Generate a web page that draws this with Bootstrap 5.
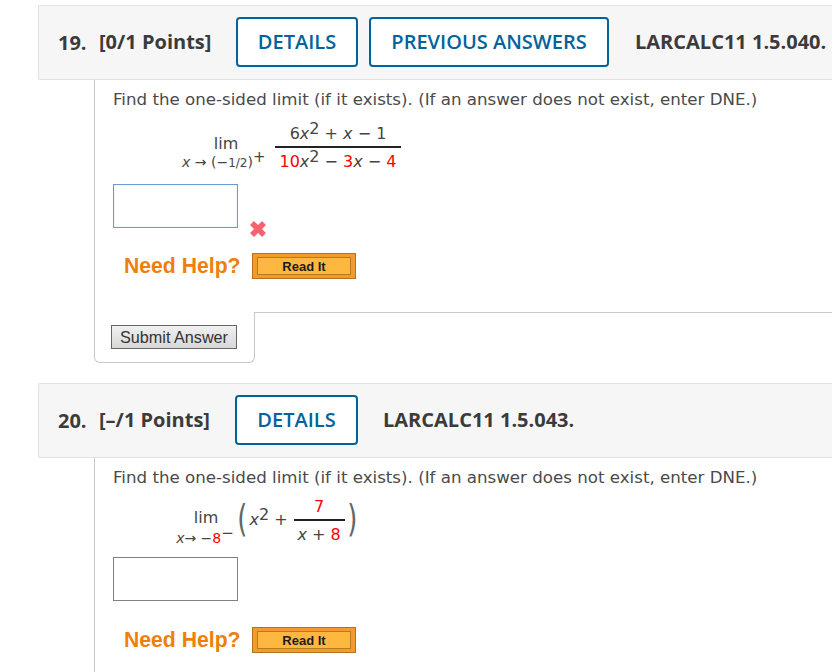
<!DOCTYPE html>
<html lang="en">
<head>
  <meta charset="UTF-8" />
  <meta name="viewport" content="width=device-width, initial-scale=1.0" />
  <title>Questions</title>
  <link href="https://cdn.jsdelivr.net/npm/bootstrap@5.3.3/dist/css/bootstrap.min.css" rel="stylesheet" />
  <style>
    html, body { height: 672px; overflow: hidden; background: #fff; }
    .page { padding: 5px 0 0 38px; }
    .q-head {
      height: 75px; background: #f6f6f6; border: 1px solid #e2e2e2; border-right: 0; border-radius: 2px 0 0 2px;
      padding-left: 19px; font-family: "Open Sans", sans-serif; font-size: 20px; color: #3b3b3b;
    }
    .q-num { width: 41px; font-weight: 700; }
    .q-pts { width: 115px; font-weight: 700; font-size: 20px; white-space: nowrap; margin-top: -1px; }
    .q-btn {
      height: 50px; margin-top: -2px; border: 2px solid #00639c; border-radius: 4px; background: #fff; color: #00639c;
      font-family: "Open Sans", sans-serif; font-weight: 600; font-size: 20px; padding: 0;
    }
    .q-ref { font-weight: 700; font-size: 20px; white-space: nowrap; margin-top: -1px; }
    .q-body { margin-left: 56px; border-left: 1px solid #c8c8c8; padding-left: 18px; }
    .q-text { font-family: "DejaVu Sans", sans-serif; font-size: 16.66px; color: #4a4a4a; line-height: 24px; white-space: nowrap; padding-top: 8px; height: 37px; }
    .eq { font-family: "DejaVu Sans", sans-serif; color: #444; font-size: 16px; line-height: 18px; white-space: nowrap; }
    .eq i { font-family: "DejaVu Sans", sans-serif; font-style: oblique; }
    .eq sup { font-size: 16px; top: -.3em; line-height: 0; }
    .red { color: #f00; }
    .lim-box { text-align: center; }
    .lim-sub { font-size: 14px; line-height: 18px; }
    .lim-sub sup { font-size: 15px !important; top: -.35em !important; }
    .lim-sub .tiny-num { font-size: 12px; }
    .frac { text-align: center; }
    .frac-top { border-bottom: 2px solid #222; padding-bottom: 3px; }
    .frac-bot { padding-top: 5px; }
    .paren { font-family: "DejaVu Sans", sans-serif; font-size: 37px; line-height: 40px; color: #666; transform: scaleX(.7); margin-top: -12px; }
    .ans-box { width: 125px; height: 44px; background: #fff; border: 1px solid #808080; display: block; }
    .ans-box.wrong { border-color: #6b9bd1; box-shadow: inset 0 0 2px #cfe0f3; }
    .help-txt { font-family: "Liberation Sans", sans-serif; font-weight: 700; font-size: 21.2px; color: #ef7f0a; width: 117px; margin-left: 11px; white-space: nowrap; }
    .read-btn {
      width: 104px; height: 26px; padding: 3px 4px; background: #f39a2c; border: 1px solid #b7701f; margin-left: 11px;
      font-family: "Liberation Sans", sans-serif; font-weight: 700; font-size: 13px; color: #1c1c1c;
    }
    .read-btn span { display: block; height: 18px; line-height: 17px; text-align: center; background: #ffb83f; border: 1px solid #b77a22; }
    .submit-cell { width: 161px; height: 51px; margin-left: 56px; padding: 13px 0 0 16px; border: 1px solid #c8c8c8; border-top: 0; border-radius: 0 0 6px 6px; }
    .submit-btn {
      width: 126px; height: 24px; padding: 0; font-family: "Liberation Sans", sans-serif; font-size: 16.2px; line-height: 20px; color: #333;
      background: linear-gradient(#f0f0f0, #d8d8d8); border: 1px solid #666;
    }
    .fill-line { border-top: 1px solid #c8c8c8; }
  </style>
</head>
<body>
<div class="page">

  <!-- Question 19 -->
  <div class="q-head d-flex align-items-center">
    <span class="q-num">19.</span>
    <span class="q-pts">[0/1 Points]</span>
    <button type="button" class="q-btn" style="width:122px;margin-left:22px">DETAILS</button>
    <button type="button" class="q-btn" style="width:240px;margin-left:11px">PREVIOUS ANSWERS</button>
    <span class="q-ref" style="margin-left:26px">LARCALC11 1.5.040.</span>
  </div>
  <div class="q-body">
    <div class="q-text">Find the one-sided limit (if it exists). (If an answer does not exist, enter DNE.)</div>
    <div class="eq d-flex align-items-center" style="margin-left:69px;height:67px">
      <div class="lim-box" style="width:76px;padding-top:6px">
        <div style="padding-left:12px">lim</div>
        <div class="lim-sub"><i>x</i> → (−<span class="tiny-num">1/2</span>)<sup>+</sup></div>
      </div>
      <div class="frac" style="width:126px;margin:-5px 0 0 17px">
        <div class="frac-top">6<i>x</i><sup>2</sup> + <i>x</i> − 1</div>
        <div class="frac-bot"><span class="red">10</span><i>x</i><sup>2</sup> − <span class="red">3</span><i>x</i> − <span class="red">4</span></div>
      </div>
    </div>
    <div class="d-flex" style="height:54px">
      <input type="text" class="ans-box wrong" aria-label="Answer" />
      <svg width="18" height="18" viewBox="0 0 18 18" style="margin:36px 0 0 11px">
        <path d="M3 3 L15 15 M15 3 L3 15" stroke="#f5636f" stroke-width="5.5" />
      </svg>
    </div>
    <div class="d-flex align-items-center" style="height:26px;margin-top:15px">
      <span class="help-txt">Need Help?</span>
      <div class="read-btn"><span>Read It</span></div>
    </div>
    <div style="height:33px"></div>
  </div>
  <div class="d-flex">
    <div class="submit-cell"><button type="button" class="submit-btn">Submit Answer</button></div>
    <div class="fill-line flex-grow-1"></div>
  </div>

  <!-- Question 20 -->
  <div class="q-head d-flex align-items-center" style="margin-top:20px">
    <span class="q-num">20.</span>
    <span class="q-pts">[–/1 Points]</span>
    <button type="button" class="q-btn" style="width:123px;margin-left:21px">DETAILS</button>
    <span class="q-ref" style="margin-left:25px">LARCALC11 1.5.043.</span>
  </div>
  <div class="q-body" style="height:220px">
    <div class="q-text">Find the one-sided limit (if it exists). (If an answer does not exist, enter DNE.)</div>
    <div class="eq d-flex align-items-center" style="margin-left:62px;height:62px">
      <div class="lim-box" style="width:60px;padding-top:4px">
        <div style="padding-left:2px">lim</div>
        <div class="lim-sub" style="margin-top:2px"><i>x</i>→ −<span class="red">8</span><sup>−</sup></div>
      </div>
      <span class="paren">(</span>
      <span style="margin-top:-12px"><i>x</i><sup>2</sup> +</span>
      <div class="frac" style="width:51px;margin:-10px 0 0 6px">
        <div class="frac-top red">7</div>
        <div class="frac-bot"><i>x</i> + <span class="red">8</span></div>
      </div>
      <span class="paren">)</span>
    </div>
    <input type="text" class="ans-box" aria-label="Answer" />
    <div class="d-flex align-items-center" style="height:26px;margin-top:26px">
      <span class="help-txt">Need Help?</span>
      <div class="read-btn"><span>Read It</span></div>
    </div>
  </div>

</div>
<script src="https://cdn.jsdelivr.net/npm/bootstrap@5.3.3/dist/js/bootstrap.bundle.min.js"></script>
</body>
</html>
